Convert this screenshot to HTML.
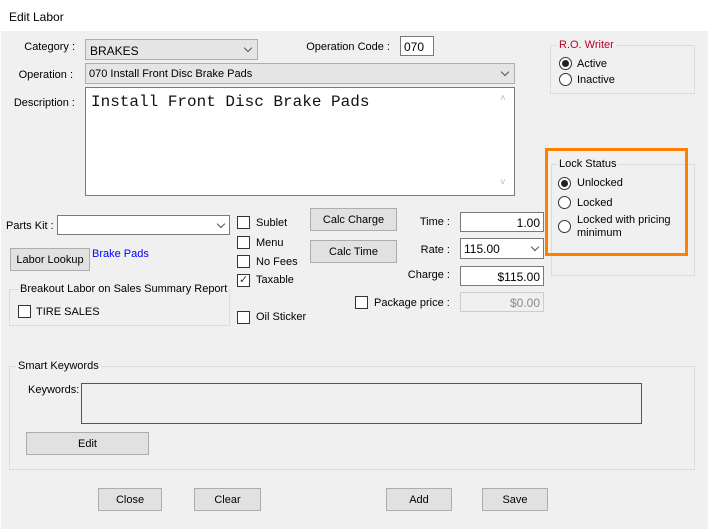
<!DOCTYPE html><html><head><meta charset="utf-8"><style>
*{box-sizing:border-box;margin:0;padding:0}
body{width:708px;height:529px;background:#fff;font-family:"Liberation Sans",sans-serif;font-size:11px;color:#000;position:relative;overflow:hidden}
.a{position:absolute;white-space:nowrap;margin-top:1px}
.r{position:absolute;white-space:nowrap;text-align:right;margin-top:1px}
#bg{position:absolute;left:1px;top:31px;width:707px;height:498px;background:#f0f0f0}
.box{position:absolute;background:#fff;border:1px solid #7a7a7a}
.cmb{position:absolute;background:#e5e5e5;border:1px solid #adadad}
.btn{position:absolute;background:#e1e1e1;border:1px solid #adadad;text-align:center;line-height:22px!important}
.grp{position:absolute;border:1px solid #dcdcdc}
.gl{position:absolute;background:#f0f0f0;padding:0 2px;top:-7px;left:6px;white-space:nowrap}
.cb{position:absolute;width:13px;height:13px;border:1px solid #333;background:#fff}
.rb{position:absolute;width:13px;height:13px;border:1px solid #333;border-radius:50%;background:#fff}
.rb.on::after{content:"";position:absolute;left:2px;top:2px;width:7px;height:7px;border-radius:50%;background:#222}
.chev{position:absolute;width:6px;height:6px;border-right:1px solid #555;border-bottom:1px solid #555;transform:rotate(45deg)}
</style></head><body>
<div id="bg"></div>
<div class="a" style="left:9px;top:9px;font-size:12px">Edit Labor</div>

<div class="r" style="right:633px;top:40px">Category :</div>
<div class="cmb" style="left:85px;top:39px;width:173px;height:21px"><span class="a" style="left:4px;top:3px;font-size:12px">BRAKES</span><div class="chev" style="left:159px;top:5px"></div></div>
<div class="r" style="right:318px;top:40px">Operation Code :</div>
<div class="box" style="left:400px;top:36px;width:34px;height:20px"><span class="a" style="left:3px;top:2px;font-size:12px">070</span></div>
<div class="r" style="right:635px;top:68px">Operation :</div>
<div class="cmb" style="left:85px;top:63px;width:430px;height:21px"><span class="a" style="left:3px;top:3px">070 Install Front Disc Brake Pads</span><div class="chev" style="left:416px;top:5px"></div></div>
<div class="r" style="right:633px;top:96px">Description :</div>
<div class="box" style="left:85px;top:87px;width:430px;height:109px"><span class="a" style="left:5px;top:4px;font-family:'Liberation Mono',monospace;font-size:16px;color:#111">Install Front Disc Brake Pads</span>
<span class="a" style="left:414px;top:4px;color:#bbb;font-size:10px">˄</span><span class="a" style="left:414px;top:88px;color:#bbb;font-size:10px">˅</span></div>

<div class="grp" style="left:550px;top:45px;width:145px;height:49px"><span class="gl" style="color:#c00020;left:6px">R.O. Writer</span></div>
<div class="rb on" style="left:559px;top:57px"></div><div class="a" style="left:577px;top:57px">Active</div>
<div class="rb" style="left:559px;top:73px"></div><div class="a" style="left:577px;top:73px">Inactive</div>

<div class="grp" style="left:551px;top:164px;width:144px;height:112px"><span class="gl" style="left:5px">Lock Status</span></div>
<div style="position:absolute;left:545px;top:148px;width:143px;height:108px;border:3px solid #ff7f00"></div>
<div class="rb on" style="left:558px;top:177px"></div><div class="a" style="left:577px;top:176px">Unlocked</div>
<div class="rb" style="left:558px;top:196px"></div><div class="a" style="left:577px;top:196px">Locked</div>
<div class="rb" style="left:558px;top:220px"></div><div class="a" style="left:577px;top:213px;line-height:13px">Locked with pricing<br>minimum</div>

<div class="a" style="left:6px;top:219px">Parts Kit :</div>
<div class="box" style="left:57px;top:215px;width:173px;height:20px"><div class="chev" style="left:160px;top:5px"></div></div>
<div class="btn" style="left:10px;top:248px;width:80px;height:23px">Labor Lookup</div>
<div class="a" style="left:92px;top:247px;color:#0000ff">Brake Pads</div>
<div class="grp" style="left:9px;top:289px;width:221px;height:37px"><span class="gl" style="left:8px">Breakout Labor on Sales Summary Report</span></div>
<div class="cb" style="left:18px;top:305px"></div><div class="a" style="left:36px;top:305px">TIRE SALES</div>

<div class="cb" style="left:237px;top:216px"></div><div class="a" style="left:256px;top:216px">Sublet</div>
<div class="cb" style="left:237px;top:236px"></div><div class="a" style="left:256px;top:236px">Menu</div>
<div class="cb" style="left:237px;top:255px"></div><div class="a" style="left:256px;top:255px">No Fees</div>
<div class="cb" style="left:237px;top:274px"><span class="a" style="left:1px;top:-3px;font-size:11px;color:#333">✓</span></div><div class="a" style="left:256px;top:273px">Taxable</div>
<div class="cb" style="left:237px;top:311px"></div><div class="a" style="left:256px;top:310px">Oil Sticker</div>

<div class="btn" style="left:310px;top:208px;width:87px;height:23px">Calc Charge</div>
<div class="btn" style="left:310px;top:240px;width:87px;height:23px">Calc Time</div>
<div class="r" style="right:258px;top:215px">Time :</div>
<div class="box" style="left:460px;top:212px;width:84px;height:20px"><span class="a" style="right:3px;top:2px;font-size:12px">1.00</span></div>
<div class="r" style="right:258px;top:243px">Rate :</div>
<div class="box" style="left:460px;top:238px;width:84px;height:21px"><span class="a" style="left:3px;top:2px;font-size:12px">115.00</span><div class="chev" style="left:71px;top:5px"></div></div>
<div class="r" style="right:258px;top:268px">Charge :</div>
<div class="box" style="left:460px;top:266px;width:84px;height:20px"><span class="a" style="right:3px;top:2px;font-size:12px">$115.00</span></div>
<div class="cb" style="left:355px;top:296px"></div><div class="a" style="left:374px;top:296px">Package price :</div>
<div class="box" style="left:460px;top:292px;width:84px;height:20px;background:#f0f0f0;border-color:#ccc"><span class="a" style="right:3px;top:2px;color:#8a8a8a;font-size:12px">$0.00</span></div>

<div class="grp" style="left:9px;top:366px;width:686px;height:104px"><span class="gl" style="left:6px">Smart Keywords</span></div>
<div class="a" style="left:28px;top:383px">Keywords:</div>
<div class="box" style="left:81px;top:383px;width:561px;height:41px;background:#f0f0f0;border-color:#555"></div>
<div class="btn" style="left:26px;top:432px;width:123px;height:23px">Edit</div>

<div class="btn" style="left:98px;top:488px;width:64px;height:23px">Close</div>
<div class="btn" style="left:194px;top:488px;width:67px;height:23px">Clear</div>
<div class="btn" style="left:386px;top:488px;width:66px;height:23px">Add</div>
<div class="btn" style="left:482px;top:488px;width:66px;height:23px">Save</div>
</body></html>
